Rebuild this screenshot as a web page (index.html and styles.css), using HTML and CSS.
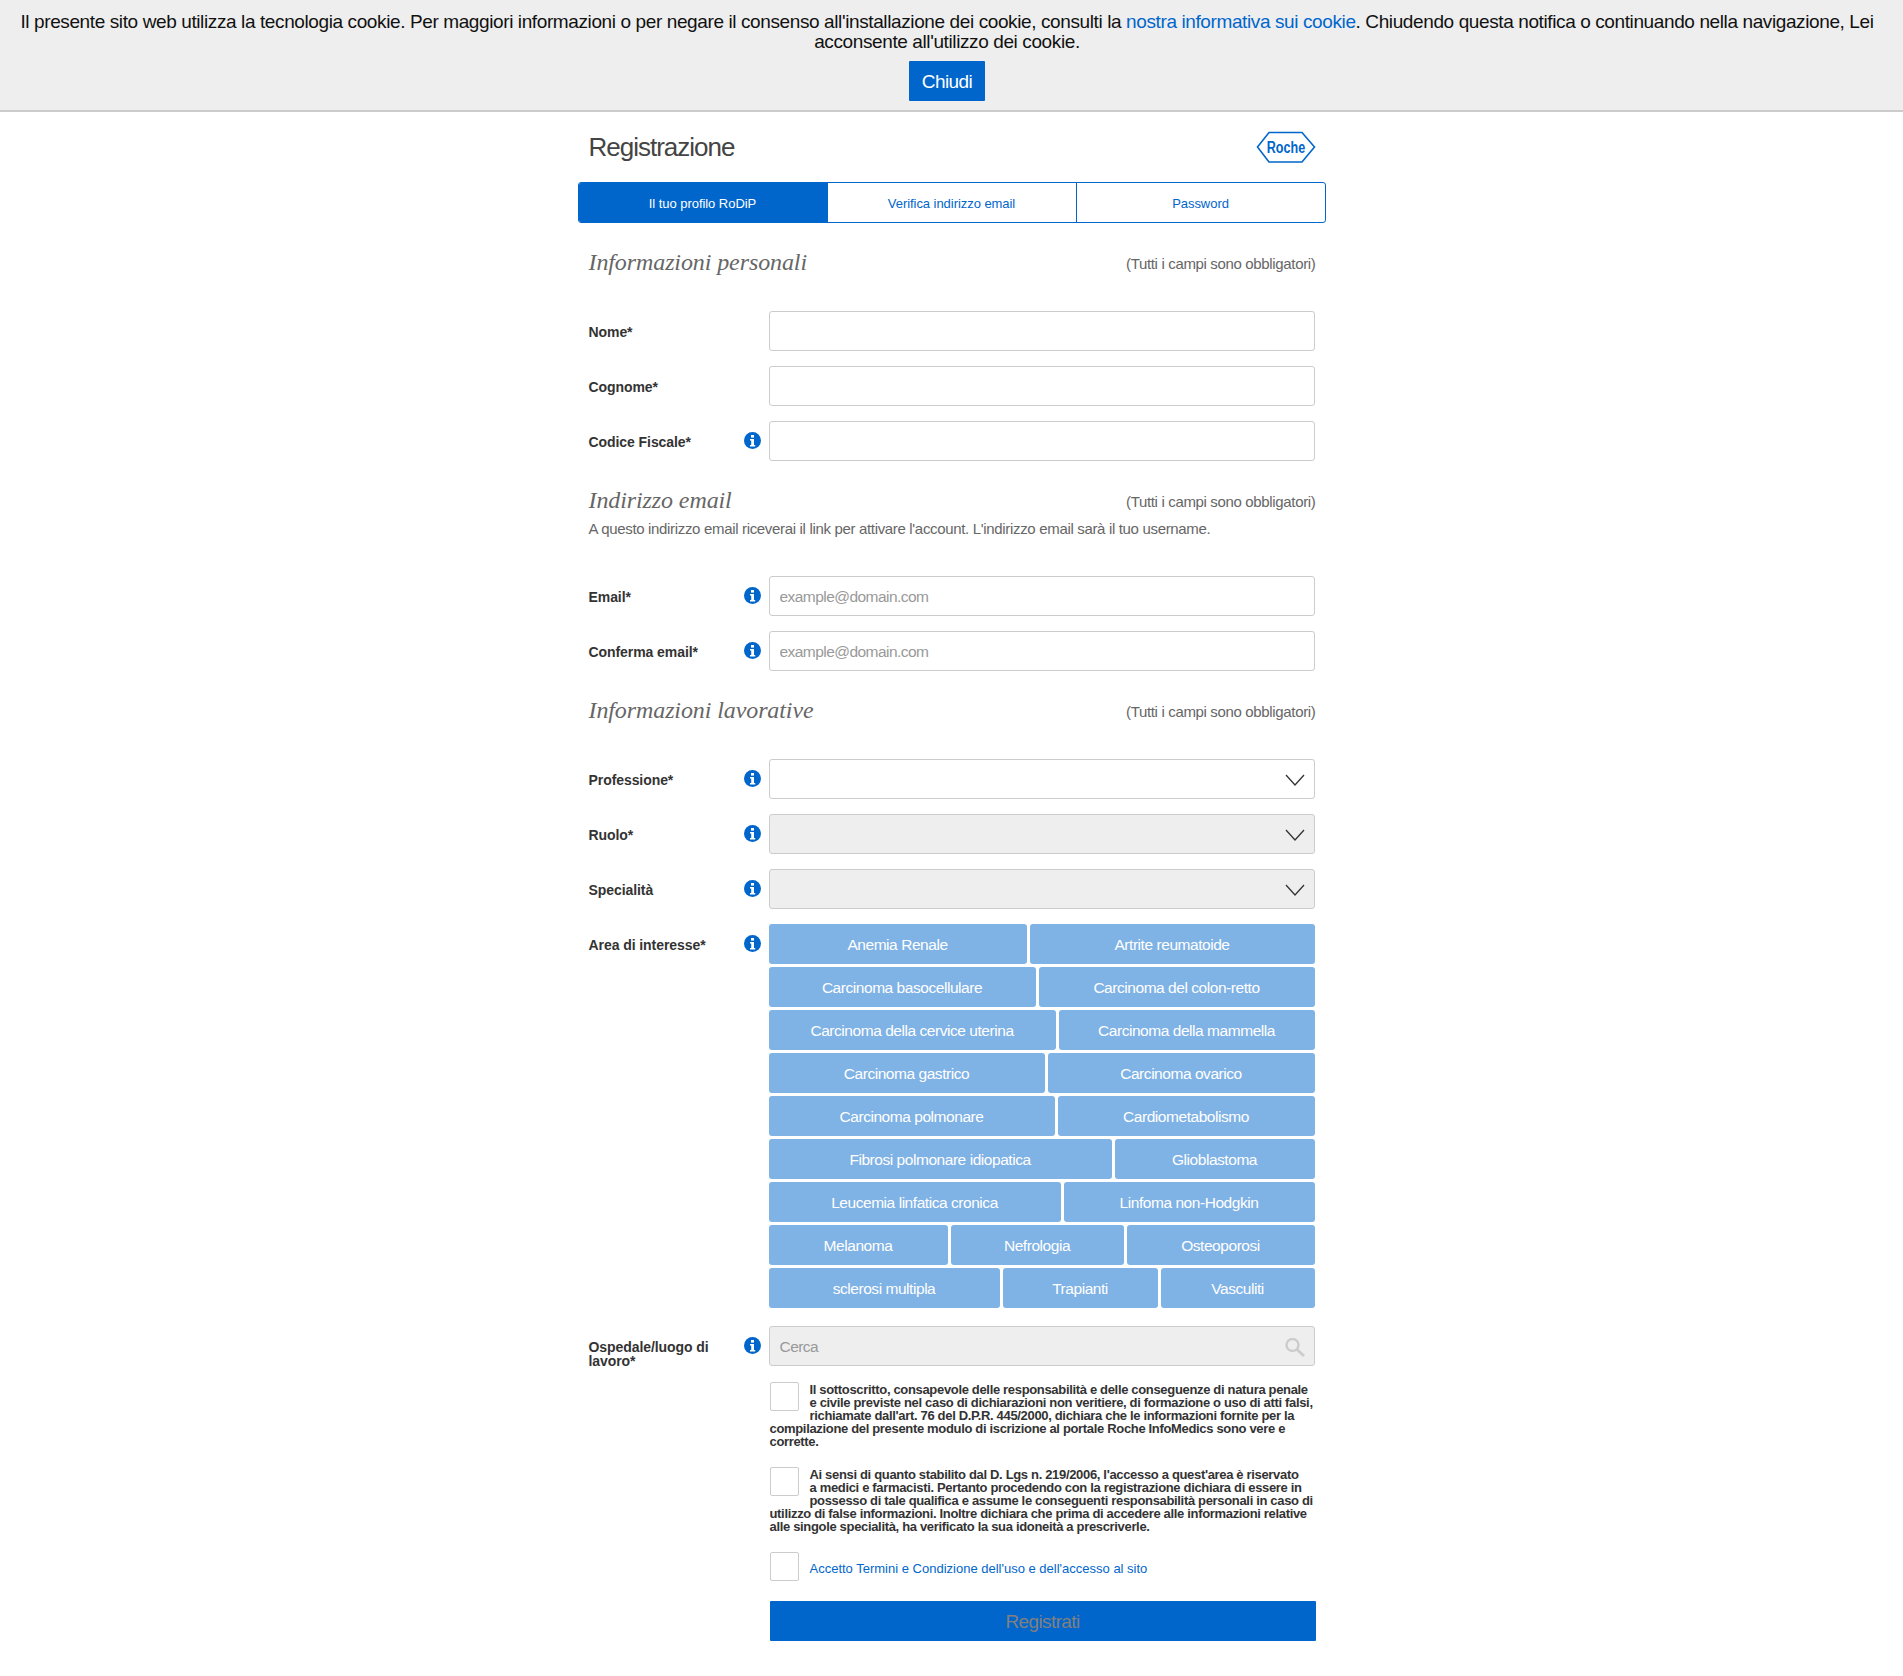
FILE: index.html
```html
<!DOCTYPE html>
<html lang="it">
<head>
    <meta charset="UTF-8">
    <meta name="viewport" content="width=device-width, initial-scale=1.0">
    <title>Registrazione</title>
    <link rel="stylesheet" href="styles.css">
</head>
<body>
    <!-- Notifica cookie -->
    <div class="cookie-bar">
        <p>Il presente sito web utilizza la tecnologia cookie. Per maggiori informazioni o per negare il consenso all'installazione dei cookie, consulti la <a href="#">nostra informativa sui cookie</a>. Chiudendo questa notifica o continuando nella navigazione, Lei acconsente all'utilizzo dei cookie.</p>
        <button class="cookie-close" type="button">Chiudi</button>
    </div>

    <main class="page">
        <header class="page-head">
            <h1>Registrazione</h1>
            <svg class="logo" width="60" height="32" viewBox="0 0 60 32">
                <polygon points="1.5,16 13,1.5 46,1.5 58.5,16 46,31 13,31" fill="none" stroke="#0066cc" stroke-width="1.6"/>
                <text transform="translate(30 21.5) scale(.74 1)" text-anchor="middle" font-family="Liberation Sans" font-weight="700" font-size="17" fill="#0066cc">Roche</text>
            </svg>
        </header>

        <nav class="steps">
            <a class="step active" href="#">Il tuo profilo RoDiP</a>
            <a class="step" href="#">Verifica indirizzo email</a>
            <a class="step" href="#">Password</a>
        </nav>

        <form>
            <!-- Informazioni personali -->
            <div class="section-head first">
                <h2>Informazioni personali</h2>
                <span class="required-note">(Tutti i campi sono obbligatori)</span>
            </div>
            <div class="row">
                <label>Nome*</label>
                <input type="text">
            </div>
            <div class="row">
                <label>Cognome*</label>
                <input type="text">
            </div>
            <div class="row">
                <label>Codice Fiscale*<svg class="info"><use href="#info-icon"/></svg></label>
                <input type="text">
            </div>

            <!-- Indirizzo email -->
            <div class="section-head tight">
                <h2>Indirizzo email</h2>
                <span class="required-note">(Tutti i campi sono obbligatori)</span>
            </div>
            <p class="section-sub">A questo indirizzo email riceverai il link per attivare l'account. L'indirizzo email sarà il tuo username.</p>
            <div class="row">
                <label>Email*<svg class="info"><use href="#info-icon"/></svg></label>
                <input type="text" placeholder="example@domain.com">
            </div>
            <div class="row">
                <label>Conferma email*<svg class="info"><use href="#info-icon"/></svg></label>
                <input type="text" placeholder="example@domain.com">
            </div>

            <!-- Informazioni lavorative -->
            <div class="section-head">
                <h2>Informazioni lavorative</h2>
                <span class="required-note">(Tutti i campi sono obbligatori)</span>
            </div>
            <div class="row">
                <label>Professione*<svg class="info"><use href="#info-icon"/></svg></label>
                <div class="select">
                    <svg class="chevron" width="20" height="12" viewBox="0 0 20 12"><path d="M1 1l9 10 9-10" fill="none" stroke="#333" stroke-width="1.3"/></svg>
                </div>
            </div>
            <div class="row">
                <label>Ruolo*<svg class="info"><use href="#info-icon"/></svg></label>
                <div class="select disabled">
                    <svg class="chevron" width="20" height="12" viewBox="0 0 20 12"><path d="M1 1l9 10 9-10" fill="none" stroke="#333" stroke-width="1.3"/></svg>
                </div>
            </div>
            <div class="row">
                <label>Specialità<svg class="info"><use href="#info-icon"/></svg></label>
                <div class="select disabled">
                    <svg class="chevron" width="20" height="12" viewBox="0 0 20 12"><path d="M1 1l9 10 9-10" fill="none" stroke="#333" stroke-width="1.3"/></svg>
                </div>
            </div>
            <div class="row">
                <label>Area di interesse*<svg class="info"><use href="#info-icon"/></svg></label>
                <div class="tags">
                    <div class="tag-row r1"><span class="tag">Anemia Renale</span><span class="tag">Artrite reumatoide</span></div>
                    <div class="tag-row r2"><span class="tag">Carcinoma basocellulare</span><span class="tag">Carcinoma del colon-retto</span></div>
                    <div class="tag-row r3"><span class="tag">Carcinoma della cervice uterina</span><span class="tag">Carcinoma della mammella</span></div>
                    <div class="tag-row r4"><span class="tag">Carcinoma gastrico</span><span class="tag">Carcinoma ovarico</span></div>
                    <div class="tag-row r5"><span class="tag">Carcinoma polmonare</span><span class="tag">Cardiometabolismo</span></div>
                    <div class="tag-row r6"><span class="tag">Fibrosi polmonare idiopatica</span><span class="tag">Glioblastoma</span></div>
                    <div class="tag-row r7"><span class="tag">Leucemia linfatica cronica</span><span class="tag">Linfoma non-Hodgkin</span></div>
                    <div class="tag-row r8"><span class="tag">Melanoma</span><span class="tag">Nefrologia</span><span class="tag">Osteoporosi</span></div>
                    <div class="tag-row r9"><span class="tag">sclerosi multipla</span><span class="tag">Trapianti</span><span class="tag">Vasculiti</span></div>
                </div>
            </div>
            <div class="row search-row">
                <label>Ospedale/luogo di lavoro*<svg class="info"><use href="#info-icon"/></svg></label>
                <div class="search">
                    <input type="text" placeholder="Cerca" disabled>
                    <svg class="search-icon" width="20" height="19" viewBox="0 0 20 19"><circle cx="7.5" cy="7" r="6" fill="none" stroke="#ccc" stroke-width="2.4"/><path d="M12 11.5l7 6.5" stroke="#ccc" stroke-width="2.8"/></svg>
                </div>
            </div>

            <div class="consents">
                <div class="consent">
                    <span class="check"></span>Il sottoscritto, consapevole delle responsabilità e delle conseguenze di natura penale e civile previste nel caso di dichiarazioni non veritiere, di formazione o uso di atti falsi, richiamate dall'art. 76 del D.P.R. 445/2000, dichiara che le informazioni fornite per la compilazione del presente modulo di iscrizione al portale Roche InfoMedics sono vere e corrette.
                </div>
                <div class="consent">
                    <span class="check"></span>Ai sensi di quanto stabilito dal D. Lgs n. 219/2006, l'accesso a quest'area è riservato a&nbsp;medici e farmacisti. Pertanto procedendo con la registrazione dichiara di essere in possesso di tale qualifica e assume le conseguenti responsabilità personali in caso di utilizzo di false informazioni. Inoltre dichiara che prima di accedere alle informazioni relative alle singole specialità, ha verificato la sua idoneità a prescriverle.
                </div>
                <div class="consent terms">
                    <span class="check"></span><a href="#">Accetto Termini e Condizione dell'uso e dell'accesso al sito</a>
                </div>
                <button class="submit" type="button">Registrati</button>
            </div>
        </form>
    </main>

    <svg width="0" height="0" class="defs">
        <symbol id="info-icon" viewBox="0 0 17 17">
            <circle cx="8.5" cy="8.5" r="8.5" fill="#0066cc"/>
            <rect x="7" y="3" width="3" height="2.6" fill="#fff"/>
            <path d="M6 7h4v6h1.2v1.4H6V13h1.2V8.4H6z" fill="#fff"/>
        </symbol>
    </svg>
</body>
</html>
```

FILE: styles.css
```css
body {
    margin: 0;
    font-family: "Liberation Sans", Arial, sans-serif;
    color: #333;
    background: #fff;
}

a {
    color: #0066cc;
    text-decoration: none;
}

.defs {
    display: block;
    height: 0;
}

/* Notifica cookie */
.cookie-bar {
    height: 98px;
    background: #eeeeee;
    border-bottom: 2px solid #cccccc;
    padding: 12px 9px 0 0;
    text-align: center;
    color: #111;
}

.cookie-bar p {
    margin: 0 20px 9px;
    font-size: 19px;
    line-height: 20px;
    letter-spacing: -0.39px;
}

.cookie-close {
    display: block;
    margin: 0 auto;
    width: 76px;
    height: 40px;
    border: 0;
    border-radius: 1px;
    padding-top: 2px;
    background: #0066cc;
    color: #fff;
    font-family: inherit;
    font-size: 19px;
    letter-spacing: -0.6px;
}

/* Contenitore */
.page {
    width: 748px;
    margin: 0 auto;
    padding-bottom: 35px;
}

.page-head {
    height: 70px;
    padding: 0 10px 0 11px;
    display: flex;
    justify-content: space-between;
    align-items: center;
}

.page-head h1 {
    margin: 0;
    font-size: 26px;
    font-weight: 400;
    letter-spacing: -1px;
    color: #444;
}

.logo {
    display: block;
}

/* Passi */
.steps {
    display: flex;
    height: 41px;
    box-sizing: border-box;
    border: 1px solid #0066cc;
    border-radius: 3px;
    overflow: hidden;
}

.step {
    flex: 1;
    display: flex;
    align-items: center;
    justify-content: center;
    padding-top: 2px;
    font-size: 13px;
    letter-spacing: -0.05px;
    border-left: 1px solid #0066cc;
}

.step:first-child {
    border-left: 0;
}

.step.active {
    background: #0066cc;
    color: #fff;
}

form {
    padding: 0 10px;
}

/* Sezioni */
.section-head {
    display: flex;
    justify-content: space-between;
    align-items: center;
    height: 28px;
    padding: 10px 0 0 1px;
    margin-bottom: 35px;
}

.section-head.first {
    margin-top: 15px;
}

.section-head.tight {
    margin-bottom: 5px;
}

.section-head h2 {
    margin: 0;
    font-family: "Liberation Serif", serif;
    font-style: italic;
    font-weight: 400;
    font-size: 24px;
    letter-spacing: -0.1px;
    color: #666;
}

.required-note {
    font-size: 15px;
    letter-spacing: -0.34px;
    color: #666;
    padding-top: 3px;
}

.section-sub {
    margin: 0 0 37px;
    padding-left: 1px;
    font-size: 15px;
    letter-spacing: -0.33px;
    line-height: 20px;
    color: #666;
}

/* Righe del form */
.row {
    display: grid;
    grid-template-columns: 181px 546px;
    margin-bottom: 15px;
}

.row label {
    position: relative;
    padding: 14px 30px 0 1px;
    font-size: 14px;
    letter-spacing: -0.07px;
    line-height: 14px;
    font-weight: 700;
    color: #333;
}

.info {
    position: absolute;
    top: 11px;
    left: 156px;
    width: 17px;
    height: 17px;
}

input,
.select {
    display: block;
    width: 100%;
    height: 40px;
    box-sizing: border-box;
    border: 1px solid #cccccc;
    border-radius: 3px;
    background: #fff;
    padding: 1px 9px 0 10px;
    font-family: inherit;
    font-size: 15.5px;
    letter-spacing: -0.55px;
    color: #333;
}

input::placeholder {
    color: #999;
}

.select {
    position: relative;
}

.select.disabled,
input:disabled {
    background: #eeeeee;
}

.chevron {
    position: absolute;
    top: 14px;
    right: 9px;
}

/* Area di interesse */
.tag-row {
    display: flex;
    gap: 3px;
    margin-bottom: 3px;
}

.tag {
    flex: 1 1 0;
    height: 40px;
    line-height: 41px;
    text-align: center;
    border-radius: 3px;
    background: #7fb2e5;
    color: #fff;
    font-size: 15.5px;
    letter-spacing: -0.45px;
}

.r1 .tag:first-child { flex: 0 0 258px; }
.r2 .tag:first-child { flex: 0 0 267px; }
.r3 .tag:first-child { flex: 0 0 287px; }
.r4 .tag:first-child { flex: 0 0 276px; }
.r5 .tag:first-child { flex: 0 0 286px; }
.r6 .tag:first-child { flex: 0 0 343px; }
.r7 .tag:first-child { flex: 0 0 292px; }
.r8 .tag:first-child { flex: 0 0 179px; }
.r8 .tag:nth-child(2) { flex: 0 0 173px; }
.r9 .tag:first-child { flex: 0 0 231px; }
.r9 .tag:nth-child(2) { flex: 0 0 155px; }

.search {
    position: relative;
}

.search-row {
    margin-bottom: 14px;
}

.search-icon {
    position: absolute;
    top: 12px;
    right: 10px;
}

/* Consensi */
.consents {
    margin-left: 182px;
}

.consent {
    padding-top: 1px;
    margin-bottom: 19px;
    font-size: 13px;
    letter-spacing: -0.33px;
    line-height: 13px;
    font-weight: 700;
    color: #333;
}

.check {
    float: left;
    width: 29px;
    height: 29px;
    margin: -1px 11px 0 0;
    box-sizing: border-box;
    border: 1px solid #cccccc;
    border-radius: 2px;
    background: #fff;
}

.terms {
    height: 28px;
    margin-bottom: 20px;
    line-height: 31px;
    font-weight: 400;
    letter-spacing: 0;
}

.submit {
    display: block;
    width: 546px;
    height: 40px;
    border: 0;
    border-radius: 1px;
    padding-top: 2px;
    background: #0066cc;
    color: #808080;
    font-family: inherit;
    font-size: 19px;
    letter-spacing: -0.6px;
}
```
